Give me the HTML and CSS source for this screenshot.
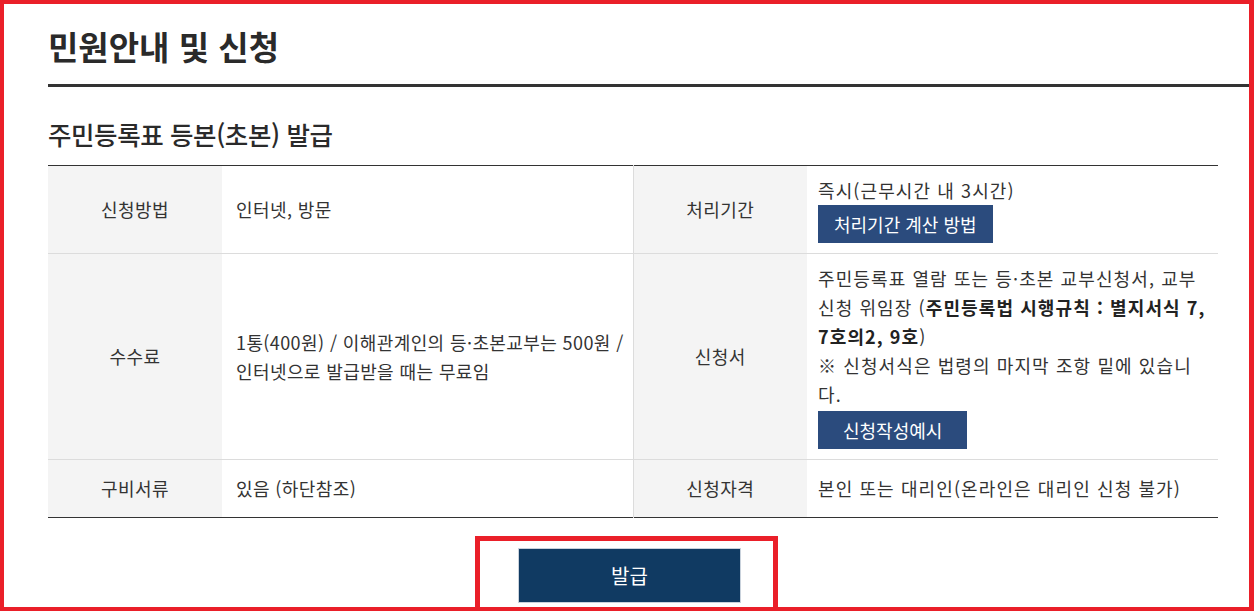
FILE: index.html
```html
<!DOCTYPE html>
<html lang="ko">
<head>
<meta charset="utf-8">
<title>민원안내 및 신청</title>
<link rel="stylesheet" href="styles.css">
</head>
<body>
<div class="frame">
  <h1 class="page-title">민원안내 및 신청</h1>
  <div class="content">
    <h2 class="sub-title">주민등록표 등본(초본) 발급</h2>
    <table class="info">
      <colgroup>
        <col class="c-th"><col class="c-td"><col class="c-th"><col class="c-td">
      </colgroup>
      <tr>
        <th>신청방법</th>
        <td class="td-left">인터넷, 방문</td>
        <th class="th-mid">처리기간</th>
        <td class="td-right">즉시(근무시간 내 3시간)<br><a class="btn">처리기간 계산 방법</a></td>
      </tr>
      <tr>
        <th>수수료</th>
        <td class="td-left">1통(400원) / 이해관계인의 등·초본교부는 500원 / 인터넷으로 발급받을 때는 무료임</td>
        <th class="th-mid">신청서</th>
        <td class="td-right">주민등록표 열람 또는 등·초본 교부신청서, 교부 신청 위임장 (<b>주민등록법 시행규칙 : 별지서식 7, 7호의2, 9호</b>)<br>※ 신청서식은 법령의 마지막 조항 밑에 있습니다.<br><a class="btn btn-2">신청작성예시</a></td>
      </tr>
      <tr class="row-short">
        <th>구비서류</th>
        <td class="td-left">있음 (하단참조)</td>
        <th class="th-mid">신청자격</th>
        <td class="td-right">본인 또는 대리인(온라인은 대리인 신청 불가)</td>
      </tr>
    </table>
    <div class="highlight">
      <a class="issue-btn">발급</a>
    </div>
  </div>
</div>
</body>
</html>
```

FILE: styles.css
```css
* { box-sizing: border-box; }
html, body { margin: 0; padding: 0; background: #fff; }
body {
  font-family: "Noto Sans CJK KR", "Noto Sans", sans-serif;
  color: #333;
}
.frame {
  width: 1254px;
  height: 611px;
  border: 4px solid #ea1f29;
  border-right-width: 5px;
  padding-left: 44px;
  overflow: hidden;
}
.page-title {
  margin: 0;
  padding: 22px 0 18px;
  font-size: 33px;
  line-height: 40px;
  font-weight: 700;
  color: #2a2a2a;
  letter-spacing: 0;
  border-bottom: 3px solid #333;
}
.content {
  padding-right: 31px;
}
.sub-title {
  margin: 32px 0 16px;
  font-size: 25.5px;
  line-height: 30px;
  font-weight: 500;
  color: #2a2a2a;
  letter-spacing: -0.4px;
}
.info {
  width: 100%;
  border-collapse: collapse;
  table-layout: fixed;
  border-top: 1px solid #333;
  border-bottom: 1px solid #333;
  font-size: 18px;
  line-height: 29px;
  letter-spacing: 0.4px;
}
.c-th { width: 174px; }
.c-td { width: 411px; }
.info tr + tr { border-top: 1px solid #dcdcdc; }
.info th {
  background: #f4f4f4;
  font-weight: 400;
  color: #333;
  text-align: center;
  padding: 10px;
}
.info th.th-mid { border-left: 1px solid #dcdcdc; }
.info td {
  vertical-align: middle;
  color: #333;
}
.info td.td-left {
  padding: 10px 4px 10px 14px;
  letter-spacing: 0.4px;
}
.info td.td-right {
  padding: 10px 10px 10px 11px;
  letter-spacing: 1.1px;
}
.info b { font-weight: 700; color: #222; }
.row-short { height: 58px; }
.btn {
  display: inline-block;
  height: 38px;
  line-height: 38px;
  padding: 0 16px;
  background: #2b4b7d;
  color: #fff;
  font-size: 18px;
  letter-spacing: 0;
  vertical-align: top;
}
.btn-2 { margin-top: 2px; padding: 0 25px; }
.highlight {
  width: 303px;
  margin: 18px 0 0 427px;
  border: 5px solid #ea1f29;
  border-bottom: 0;
  padding: 7px 32px 4px 38px;
}
.issue-btn {
  display: block;
  height: 55px;
  line-height: 53px;
  text-align: center;
  background: #103a62;
  border: 1px solid #c9d2dc;
  color: #fff;
  font-size: 20px;
  letter-spacing: 0;
}
```
